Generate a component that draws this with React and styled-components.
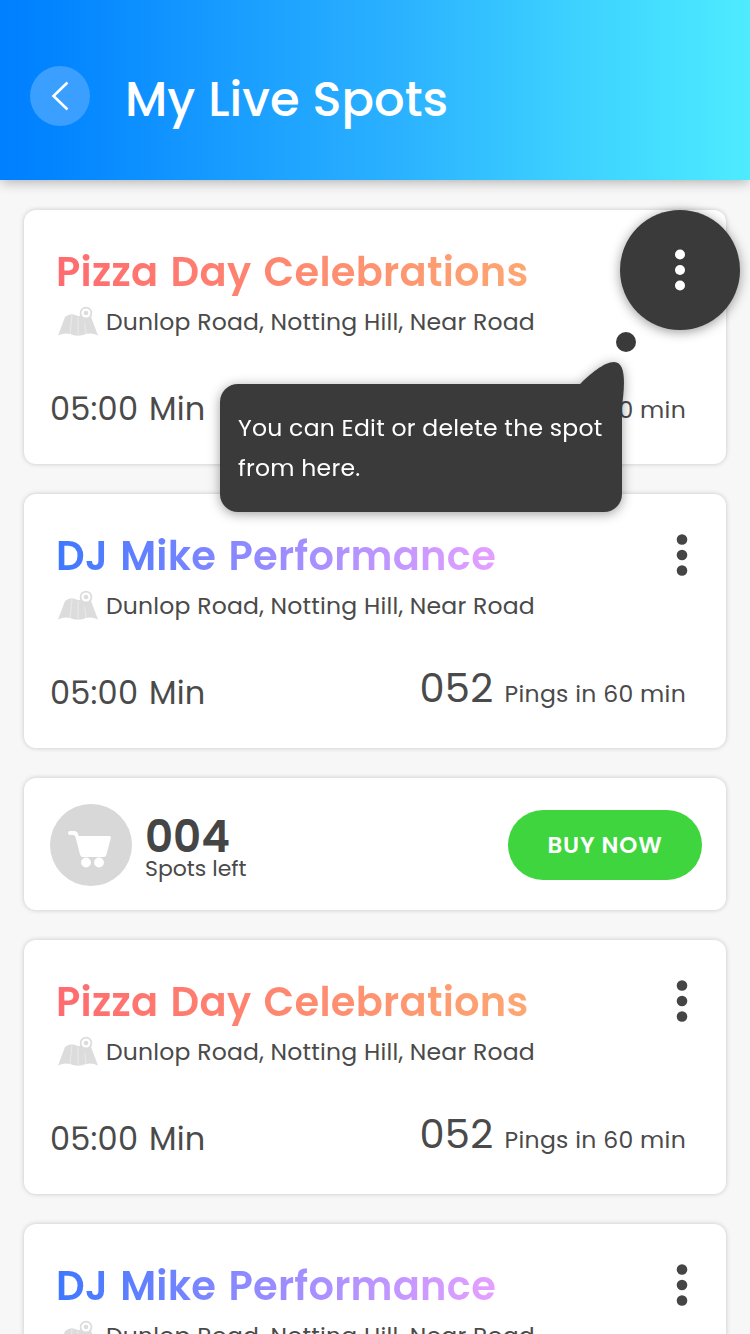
import React from "react";
import styled, { createGlobalStyle } from "styled-components";

const GlobalStyle = createGlobalStyle`
  * { box-sizing: border-box; }
  html, body { margin: 0; height: 1334px; overflow: hidden; background: #f7f7f7; }
  body { font-family: Poppins, Inter, "Liberation Sans", sans-serif; color: #4a4a4a; }
  button { font: inherit; border: 0; padding: 0; cursor: pointer; }
`;

const Screen = styled.div`
  position: relative;
  width: 750px;
  height: 1334px;
  overflow: hidden;
  background: #f7f7f7;
`;

const Header = styled.header`
  display: flex;
  height: 180px;
  padding: 66px 30px 0;
  gap: 35px;
  background: linear-gradient(90deg, #007fff 0%, #0385ff 8%, #1a9eff 32%, #2bb1ff 53%, #3acdff 73%, #48e4ff 93%, #4eebff 100%);
  box-shadow: 0 3px 12px -1px rgba(0, 0, 0, 0.3);
`;

const BackButton = styled.button`
  display: grid;
  place-items: center;
  width: 60px;
  height: 60px;
  border-radius: 50%;
  background: #3b9fff;
`;

const ScreenTitle = styled.h1`
  margin: 0;
  padding-top: 3px;
  font-size: 48px;
  line-height: 62px;
  font-weight: 500;
  word-spacing: 0.5px;
  color: #fff;
  white-space: nowrap;
`;

const SpotList = styled.main`
  display: flex;
  flex-direction: column;
  gap: 30px;
  padding: 30px 24px 0;
`;

const Card = styled.section`
  display: flex;
  flex: none;
  width: 702px;
  border-radius: 12px;
  background: #fff;
  box-shadow: 0 0 5px rgba(0, 0, 0, 0.2);
`;

const SpotPanel = styled(Card)`
  height: 254px;
  padding: 38px 39px 0 26px;
  flex-direction: column;
`;

const TitleRow = styled.div`
  display: flex;
  justify-content: space-between;
  height: 48px;
  padding-left: 6px;
`;

const SpotTitle = styled.h2`
  margin: 0;
  font-size: 40px;
  line-height: 48px;
  font-weight: 600;
  letter-spacing: 0.25px;
  word-spacing: 2.4px;
  color: transparent;
  background: ${(p) => p.$tint};
  background-clip: text;
  -webkit-background-clip: text;
  white-space: nowrap;
`;

const MenuButton = styled.button`
  display: block;
  width: 12px;
  height: 42px;
  margin: 2px -1px 0 0;
  background: none;
`;

const Address = styled.div`
  display: flex;
  align-items: center;
  gap: 8px;
  height: 40px;
  margin-top: 6px;
  padding-left: 8px;
  font-size: 23.5px;
  line-height: 40px;
  letter-spacing: 0.22px;
  white-space: nowrap;
`;

const Stats = styled.div`
  display: flex;
  justify-content: space-between;
  margin-top: 41px;
  padding-right: 1px;
  height: 60px;
`;

const TimeLeft = styled.div`
  padding-top: 6px;
  font-size: 32px;
  line-height: 40px;
  letter-spacing: 0.2px;
  word-spacing: 2px;
  white-space: nowrap;
`;

const Pings = styled.div`
  display: flex;
  align-items: baseline;
  gap: 11px;
  font-size: 23.5px;
  line-height: 42px;
  letter-spacing: 0.3px;
  white-space: nowrap;
`;

const PingCount = styled.span`
  font-size: 40px;
`;

const BuyPanel = styled(Card)`
  height: 132px;
  padding: 1px 24px 0 26px;
  align-items: center;
`;

const CartBadge = styled.div`
  width: 82px;
  height: 82px;
  border-radius: 50%;
  background: #d8d8d8;
`;

const SpotsLeft = styled.div`
  margin-left: 13px;
  padding-top: 13px;
  flex: 1;
`;

const SpotsCount = styled.div`
  font-size: 43.5px;
  line-height: 36px;
  font-weight: 600;
  color: #454545;
`;

const SpotsLabel = styled.div`
  font-size: 22px;
  line-height: 28px;
`;

const BuyButton = styled.button`
  width: 194px;
  height: 70px;
  padding-top: 1px;
  border-radius: 35px;
  background: #3ed53e;
  && {
    font-size: 23px;
    font-weight: 600;
  }
  letter-spacing: 0.8px;
  color: #fff;
`;

const Spotlight = styled.button`
  position: absolute;
  top: 210px;
  left: 620px;
  display: grid;
  place-items: center;
  width: 120px;
  height: 120px;
  border-radius: 50%;
  background: #3a3a3a;
  box-shadow: 0 2px 12px rgba(0, 0, 0, 0.4);
`;

const HintDot = styled.span`
  position: absolute;
  top: 332px;
  left: 616px;
  width: 20px;
  height: 20px;
  border-radius: 50%;
  background: #3a3a3a;
`;

const Tooltip = styled.div`
  position: absolute;
  top: 384px;
  left: 220px;
  width: 402px;
  height: 128px;
  padding: 24px 18px;
  border-radius: 18px;
  background: #3a3a3a;
  filter: drop-shadow(0 2px 6px rgba(0, 0, 0, 0.38));
  font-size: 23.5px;
  line-height: 40px;
  letter-spacing: 0.26px;
  color: #fff;
  white-space: nowrap;
`;

const TooltipTail = styled.svg`
  position: absolute;
  left: 356px;
  top: -24px;
`;

const TooltipLine = styled.span`
  display: block;
`;

const Dots = ({ color, r = 5.3 }) => (
  <svg width="12" height="42" viewBox="0 0 12 42" fill={color} display="block">
    <circle cx="6" cy="5.5" r={r} />
    <circle cx="6" cy="21" r={r} />
    <circle cx="6" cy="36.5" r={r} />
  </svg>
);

const MapIcon = () => (
  <svg width="40" height="32" viewBox="0 0 40 32">
    <path d="M7 11 Q12 7 17 9 Q21 11 25 9 Q30 8 33 11 L40 29.5 Q34 26.5 28 28 Q20 31.5 12 28 Q6 26.5 0 29.5 Z" fill="#dcdcdc" />
    <path d="M14 9 L12 28 M20 11 V29 M26 10 L28 28" fill="none" stroke="#e8e8e8" strokeWidth="1.2" />
    <path d="M28 19 C25.5 15 21.8 11.5 21.8 7 A6.2 6.2 0 0 1 34.2 7 C34.2 11.5 30.5 15 28 19Z" fill="#dcdcdc" />
    <circle cx="28" cy="7" r="4.6" fill="#fff" />
    <circle cx="28" cy="7" r="2.3" fill="#dcdcdc" />
  </svg>
);

const CartIcon = () => (
  <svg width="82" height="82" viewBox="0 0 82 82" fill="#fff">
    <path d="M20 27 H24.5 Q27.8 27.2 28.6 32 H59.5 Q61.2 32 60.8 34 L56.5 50.5 Q56 53 53.5 53 H33 Q30.5 53 30 50.5 L25.8 34 Q25.2 31 23.2 31 H20 Q18 31 18 29 Q18 27 20 27Z" />
    <circle cx="36" cy="58.5" r="4.9" />
    <circle cx="49" cy="58.5" r="4.9" />
  </svg>
);

const spots = {
  pizza: { title: "Pizza Day Celebrations", tint: "linear-gradient(90deg, #ff6b6f, #fda772)" },
  dj: { title: "DJ Mike Performance", tint: "linear-gradient(90deg, #3d78ff, #9a8cff 50%, #e5a0ff)" },
};

const SpotCard = ({ kind, menuHidden }) => {
  const spot = spots[kind];
  return (
    <SpotPanel>
      <TitleRow>
        <SpotTitle $tint={spot.tint}>{spot.title}</SpotTitle>
        {!menuHidden && <MenuButton aria-label="Spot options"><Dots color="#454545" /></MenuButton>}
      </TitleRow>
      <Address>
        <MapIcon />
        <span>Dunlop Road, Notting Hill, Near Road</span>
      </Address>
      <Stats>
        <TimeLeft>05:00 Min</TimeLeft>
        <Pings>
          <PingCount>052</PingCount>
          <span>Pings in 60 min</span>
        </Pings>
      </Stats>
    </SpotPanel>
  );
};

export default function App() {
  return (
    <>
      <GlobalStyle />
      <Screen>
        <Header>
          <BackButton aria-label="Back">
            <svg width="20" height="30" viewBox="0 0 20 30" fill="none" stroke="#fff" strokeWidth="2.6">
              <path d="M17.5 1.5 L3.5 15 L17.5 28.5" />
            </svg>
          </BackButton>
          <ScreenTitle>My Live Spots</ScreenTitle>
        </Header>
        <SpotList>
          <SpotCard kind="pizza" menuHidden />
          <SpotCard kind="dj" />
          <BuyPanel>
            <CartBadge><CartIcon /></CartBadge>
            <SpotsLeft>
              <SpotsCount>004</SpotsCount>
              <SpotsLabel>Spots left</SpotsLabel>
            </SpotsLeft>
            <BuyButton>BUY NOW</BuyButton>
          </BuyPanel>
          <SpotCard kind="pizza" />
          <SpotCard kind="dj" />
        </SpotList>
        <Spotlight aria-label="Spot options"><Dots color="#fff" r={5} /></Spotlight>
        <HintDot />
        <Tooltip>
          <TooltipTail width="52" height="50" viewBox="0 0 52 50" fill="#3a3a3a">
            <path d="M3 25 C14 14 28 2 38 2 C50 2 49 24 46 46 L40 46 L3 26Z" />
          </TooltipTail>
          <TooltipLine>You can Edit or delete the spot</TooltipLine>
          <TooltipLine>from here.</TooltipLine>
        </Tooltip>
      </Screen>
    </>
  );
}
